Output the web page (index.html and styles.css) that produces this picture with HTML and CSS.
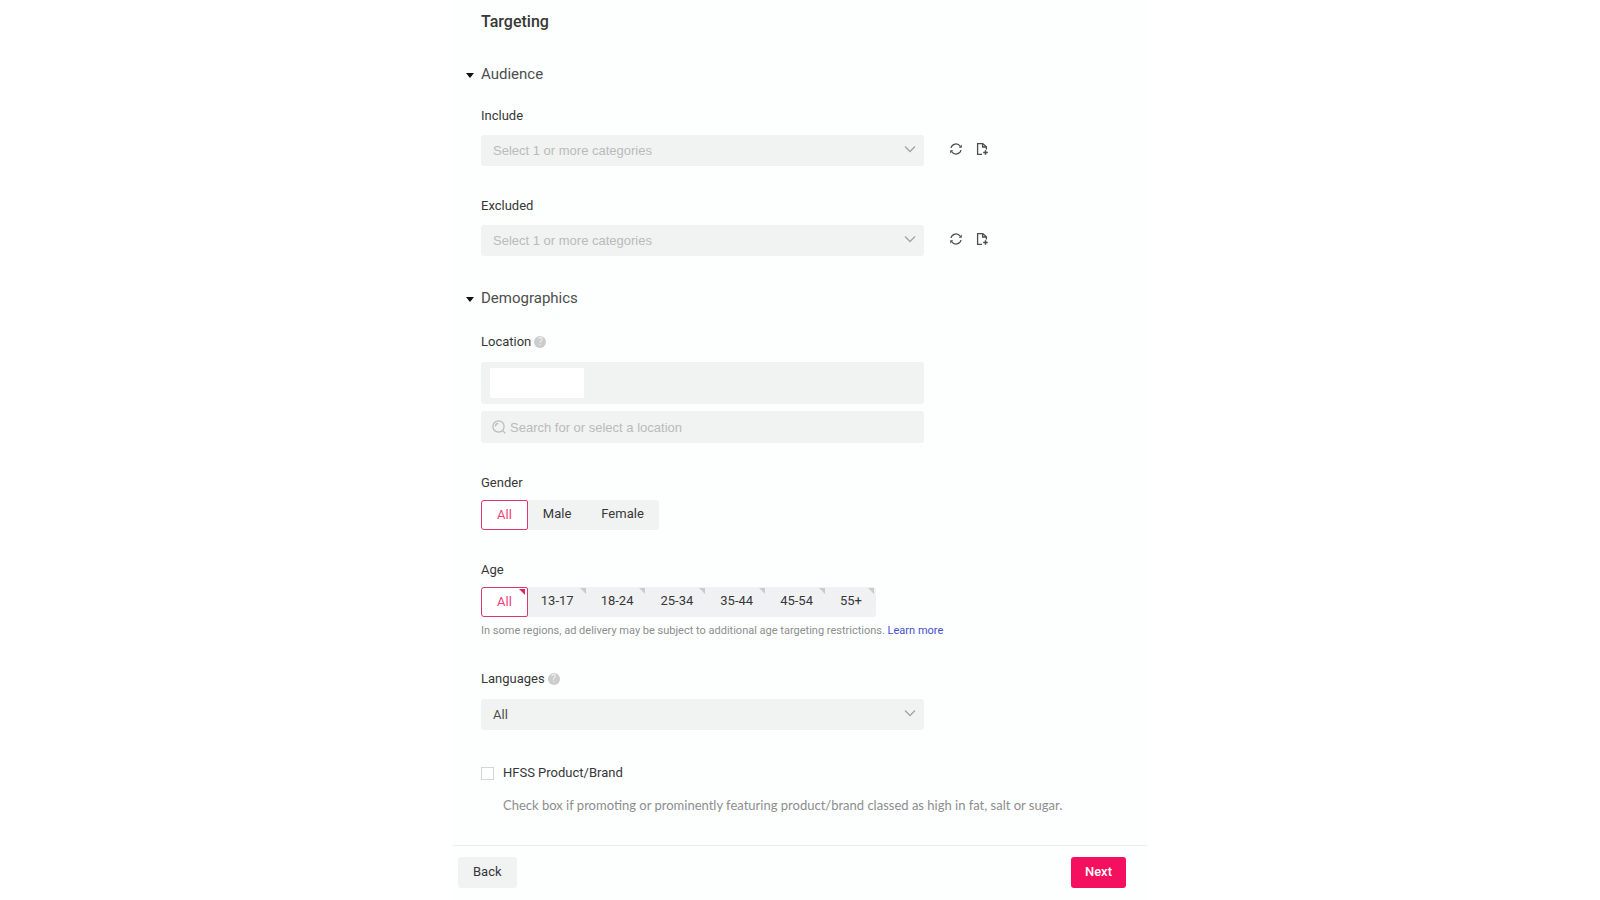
FILE: index.html
```html
<!DOCTYPE html>
<html lang="en">

<head>
    <meta charset="UTF-8">
    <title>Targeting</title>
    <link rel="stylesheet" href="styles.css">
</head>

<body>
    <!-- shared icons -->
    <svg class="sprite" aria-hidden="true">
        <symbol id="chevron" viewBox="0 0 12 8">
            <path d="M1 1.5l5 5 5-5" fill="none" stroke="currentColor" stroke-width="1.3" />
        </symbol>
        <symbol id="refresh" viewBox="0 0 14 14">
            <path d="M2 6A5 5 0 0 1 11.2 4.4M12 8A5 5 0 0 1 2.8 9.6" fill="none" stroke="currentColor" stroke-width="1.2" />
            <path d="M12.8 2.4v3.4H9.8zM1.2 11.6V8.2h3z" fill="currentColor" />
        </symbol>
        <symbol id="newfile" viewBox="0 0 14 14">
            <path d="M7 12.4H2.6V1.6h5.2l3.6 3.2v2.6M7.6 1.6V5h3.8" fill="none" stroke="currentColor" stroke-width="1.3" />
            <path d="M10.5 8.2v4.6M8.2 10.5h4.6" fill="none" stroke="currentColor" stroke-width="1.5" />
        </symbol>
        <symbol id="search" viewBox="0 0 14 14">
            <circle cx="6.5" cy="6.5" r="5.6" fill="none" stroke="currentColor" stroke-width="1.2" />
            <path d="M10.6 10.6l2.8 2.8M3.4 6.3a3 3 0 0 1 2.8-2.9" fill="none" stroke="currentColor" stroke-width="1.2" />
        </symbol>
    </svg>

    <main class="panel">
        <form class="form">
            <h1 class="title">Targeting</h1>

            <details class="section" open>
                <summary class="section-title">Audience</summary>
                <div class="group">
                    <label class="label" for="include">Include</label>
                    <div class="row">
                        <div class="select">
                            <select id="include" class="placeholder">
                                <option>Select 1 or more categories</option>
                            </select>
                            <svg class="chevron"><use href="#chevron" /></svg>
                        </div>
                        <div class="actions">
                            <button type="button" class="icon-btn" aria-label="Refresh"><svg><use href="#refresh" /></svg></button>
                            <button type="button" class="icon-btn" aria-label="Create new"><svg><use href="#newfile" /></svg></button>
                        </div>
                    </div>
                </div>
                <div class="group">
                    <label class="label" for="excluded">Excluded</label>
                    <div class="row">
                        <div class="select">
                            <select id="excluded" class="placeholder">
                                <option>Select 1 or more categories</option>
                            </select>
                            <svg class="chevron"><use href="#chevron" /></svg>
                        </div>
                        <div class="actions">
                            <button type="button" class="icon-btn" aria-label="Refresh"><svg><use href="#refresh" /></svg></button>
                            <button type="button" class="icon-btn" aria-label="Create new"><svg><use href="#newfile" /></svg></button>
                        </div>
                    </div>
                </div>
            </details>

            <details class="section demographics" open>
                <summary class="section-title">Demographics</summary>
                <div class="group">
                    <div class="label-row">
                        <label class="label" for="location">Location</label>
                        <span class="help">?</span>
                    </div>
                    <div class="tags"><span class="tag"></span></div>
                    <div class="search">
                        <svg><use href="#search" /></svg>
                        <input type="text" id="location" placeholder="Search for or select a location">
                    </div>
                </div>

                <fieldset class="group">
                    <legend class="label">Gender</legend>
                    <div class="segments">
                        <label class="segment"><input type="radio" name="gender" checked>All</label>
                        <label class="segment"><input type="radio" name="gender">Male</label>
                        <label class="segment"><input type="radio" name="gender">Female</label>
                    </div>
                </fieldset>

                <fieldset class="group">
                    <legend class="label">Age</legend>
                    <div class="segments age">
                        <label class="segment"><input type="checkbox" name="age" checked>All</label>
                        <label class="segment"><input type="checkbox" name="age">13-17</label>
                        <label class="segment"><input type="checkbox" name="age">18-24</label>
                        <label class="segment"><input type="checkbox" name="age">25-34</label>
                        <label class="segment"><input type="checkbox" name="age">35-44</label>
                        <label class="segment"><input type="checkbox" name="age">45-54</label>
                        <label class="segment"><input type="checkbox" name="age">55+</label>
                    </div>
                    <p class="note">In some regions, ad delivery may be subject to additional age targeting restrictions. <a href="#">Learn more</a></p>
                </fieldset>

                <div class="group">
                    <div class="label-row">
                        <label class="label" for="languages">Languages</label>
                        <span class="help">?</span>
                    </div>
                    <div class="select">
                        <select id="languages">
                            <option>All</option>
                        </select>
                        <svg class="chevron"><use href="#chevron" /></svg>
                    </div>
                </div>

                <div class="hfss">
                    <input type="checkbox" id="hfss">
                    <label class="label" for="hfss">HFSS Product/Brand</label>
                    <p class="hfss-text">Check box if promoting or prominently featuring product/brand classed as high in fat, salt or sugar.</p>
                </div>
            </details>
        </form>

        <footer class="footer">
            <button type="button" class="btn">Back</button>
            <button type="button" class="btn primary">Next</button>
        </footer>
    </main>
</body>

</html>
```
FILE: styles.css
```css
* {
    box-sizing: border-box;
}

body {
    margin: 0;
    background-color: #fff;
    font-family: Roboto, "Liberation Sans", sans-serif;
    font-size: 13px;
    color: #363838;
}

.sprite {
    display: none;
}

.panel {
    display: flex;
    flex-direction: column;
    max-width: 694px;
    min-height: 100vh;
    margin: 0 auto;
    background-color: #fdfefe;
}

.form {
    flex: 1;
    padding: 10px 28px 28px;
}

.title {
    margin: 0 0 28px;
    font-size: 16px;
    font-weight: 500;
    line-height: 24px;
}

.section {
    margin-bottom: 30px;
}

.section:last-child {
    margin-bottom: 0;
}

.section-title {
    display: flex;
    align-items: center;
    gap: 7px;
    margin: 0 0 20px -15px;
    font-size: 15px;
    line-height: 24px;
    color: #4c4e4e;
    cursor: pointer;
}

.demographics .section-title {
    margin-bottom: 22px;
}

/* little arrow left of the section name */
.section-title::before {
    content: "";
    margin-top: 3px;
    border: 4px solid transparent;
    border-top: 5px solid #111;
    border-bottom: 0;
}

.group {
    margin: 0 0 30px;
    padding: 0;
    border: 0;
}

.label {
    display: block;
    padding: 0;
    line-height: 20px;
}

.group > .label {
    margin-bottom: 9px;
}

fieldset.group > .label {
    margin-bottom: 7px;
}

.label-row {
    display: flex;
    align-items: center;
    gap: 3px;
    margin-bottom: 10px;
}

.help {
    width: 12px;
    height: 12px;
    border-radius: 50%;
    background-color: #cbcdcd;
    color: #f3f4f4;
    font-size: 10px;
    line-height: 12px;
    text-align: center;
}

.row {
    display: flex;
    align-items: center;
    gap: 25px;
}

.select {
    display: grid;
    align-items: center;
    width: 100%;
    max-width: 443px;
}

.select select,
.select .chevron {
    grid-area: 1 / 1;
}

select {
    appearance: none;
    width: 100%;
    height: 31px;
    padding: 0 36px 0 12px;
    border: 0;
    border-radius: 3px;
    background-color: #f1f2f2;
    color: #4c4e4e;
    font: 13px Roboto, "Liberation Sans", sans-serif;
}

select.placeholder {
    color: #b9bbbb;
    font: 13px "Liberation Sans", Arial, sans-serif;
}

.chevron {
    justify-self: end;
    width: 12px;
    height: 8px;
    margin: 0 8px 4px 0;
    color: #a2a4a4;
    pointer-events: none;
}

.actions {
    display: flex;
    gap: 12px;
    padding-bottom: 4px;
}

.icon-btn {
    display: flex;
    padding: 0;
    border: 0;
    background: none;
    color: #4c4e4e;
}

.icon-btn svg,
.search svg {
    width: 14px;
    height: 14px;
}

.tags {
    max-width: 443px;
    padding: 6px 9px;
    border-radius: 3px;
    background-color: #f1f2f2;
}

.tag {
    display: block;
    width: 94px;
    height: 30px;
    background-color: #fff;
}

.search {
    display: flex;
    align-items: center;
    gap: 4px;
    max-width: 443px;
    height: 32px;
    margin-top: 7px;
    padding: 0 11px;
    border-radius: 3px;
    background-color: #f1f2f2;
    color: #b9bbbb;
}

.search input {
    flex: 1;
    padding: 0;
    border: 0;
    background: none;
    font: 13px "Liberation Sans", Arial, sans-serif;
}

.search input::placeholder {
    color: #b9bbbb;
}

.segments {
    display: flex;
    width: fit-content;
    border-radius: 3px;
    background-color: #f1f2f2;
}

.segment {
    position: relative;
    padding: 0 15px;
    line-height: 28px;
}

.segment input {
    position: absolute;
    opacity: 0;
}

.segments .segment:has(:checked) {
    padding: 0 15px;
    border: 1px solid #d8386f;
    border-radius: 3px 2px 2px 3px;
    background-color: #fff;
    color: #ee3f7c;
}

.age {
    background-color: #f0f1f3;
}

.age .segment {
    padding: 0 14px 0 13px;
}

.age .segment::after {
    content: "";
    position: absolute;
    top: 1px;
    right: 2px;
    border: 3px solid #c9cbcb;
    border-bottom-color: transparent;
    border-left-color: transparent;
}

.age .segment:has(:checked)::after {
    border-top-color: #e8215f;
    border-right-color: #e8215f;
}

.note {
    margin: 6px 0 0;
    font-size: 11px;
    line-height: 16px;
    color: #8c8e8e;
}

.note a {
    color: #4650cf;
    text-decoration: none;
}

.hfss {
    display: grid;
    grid-template-columns: 13px 1fr;
    align-items: center;
    gap: 12px 9px;
    padding-top: 3px;
}

.hfss input {
    appearance: none;
    width: 13px;
    height: 13px;
    margin: 0;
    border: 1px solid #d4d6d6;
    background-color: #fff;
}

.hfss-text {
    grid-column: 2;
    margin: 0;
    font-family: Lato, Roboto, sans-serif;
    line-height: 20px;
    color: #8c8e8e;
}

.footer {
    display: flex;
    justify-content: space-between;
    padding: 11px 21px 12px 5px;
    border-top: 1px solid #eceeee;
}

.btn {
    height: 31px;
    padding: 0 15px 2px;
    border: 0;
    border-radius: 3px;
    background-color: #f1f2f2;
    color: #363838;
    font: 13px Roboto, "Liberation Sans", sans-serif;
}

.btn.primary {
    padding: 0 14px 2px;
    background-color: #f5105f;
    color: #fff;
    font-weight: 500;
}
```
